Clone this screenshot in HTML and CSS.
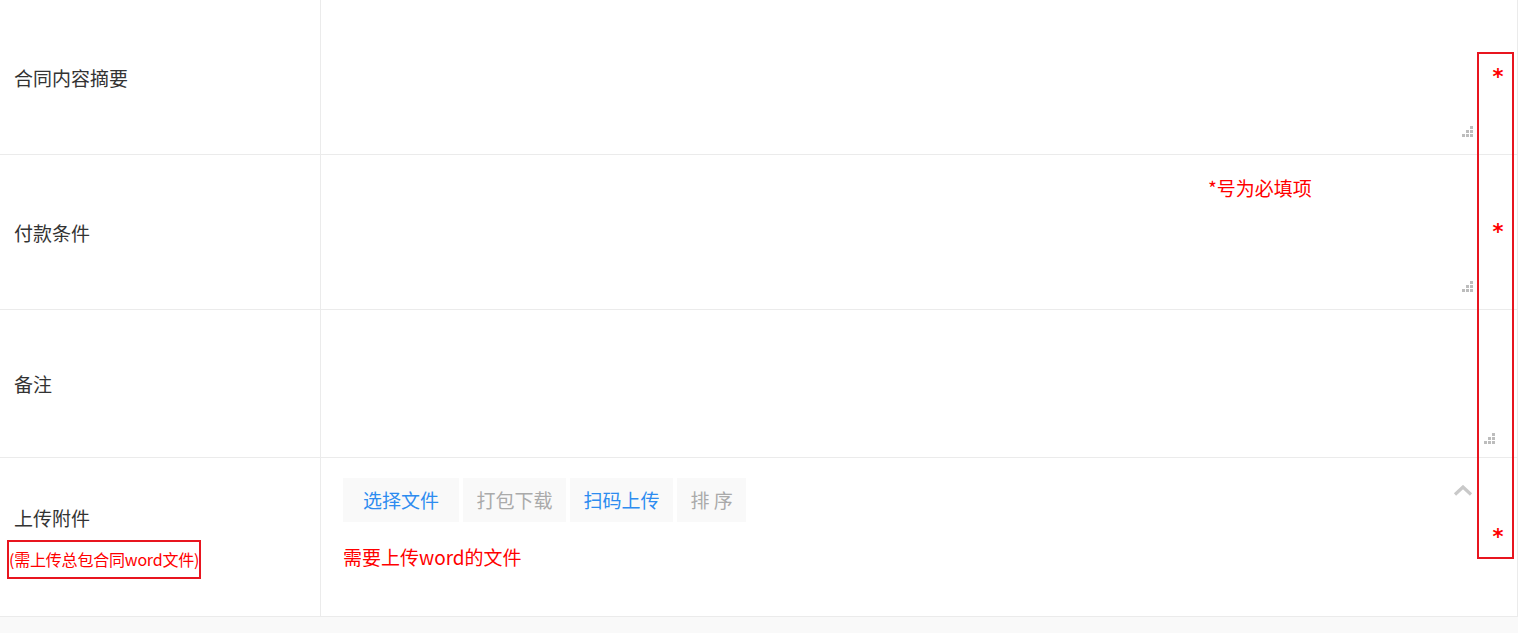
FILE: index.html
```html
<!DOCTYPE html>
<html lang="zh-CN">
<head>
<meta charset="utf-8">
<title>合同表单</title>
<link rel="stylesheet" href="styles.css">
</head>
<body>
<div class="form">
  <div class="row row-1">
    <div class="label">合同内容摘要</div>
    <div class="field">
      <div class="area"><textarea class="input"></textarea><svg class="grip" width="11" height="11" viewBox="0 0 11 11"><rect x="8" y="0" width="3" height="3"/><rect x="4" y="4" width="3" height="3"/><rect x="8" y="4" width="3" height="3"/><rect x="0" y="8" width="3" height="3"/><rect x="4" y="8" width="3" height="3"/><rect x="8" y="8" width="3" height="3"/></svg></div>
      <span class="req">*</span>
    </div>
  </div>
  <div class="row row-2">
    <div class="label">付款条件</div>
    <div class="field">
      <div class="area"><textarea class="input"></textarea><svg class="grip" width="11" height="11" viewBox="0 0 11 11"><rect x="8" y="0" width="3" height="3"/><rect x="4" y="4" width="3" height="3"/><rect x="8" y="4" width="3" height="3"/><rect x="0" y="8" width="3" height="3"/><rect x="4" y="8" width="3" height="3"/><rect x="8" y="8" width="3" height="3"/></svg></div>
      <span class="req">*</span>
      <span class="note">*号为必填项</span>
    </div>
  </div>
  <div class="row row-3">
    <div class="label">备注</div>
    <div class="field field-full">
      <div class="area"><textarea class="input"></textarea><svg class="grip" width="11" height="11" viewBox="0 0 11 11"><rect x="8" y="0" width="3" height="3"/><rect x="4" y="4" width="3" height="3"/><rect x="8" y="4" width="3" height="3"/><rect x="0" y="8" width="3" height="3"/><rect x="4" y="8" width="3" height="3"/><rect x="8" y="8" width="3" height="3"/></svg></div>
    </div>
  </div>
  <div class="row row-4">
    <div class="label label-stack">
      <div class="label-title">上传附件</div>
      <div class="label-hint">(需上传总包合同word文件)</div>
    </div>
    <div class="field field-upload">
      <div class="upload">
        <div class="btns">
          <span class="btn btn-blue btn-wide">选择文件</span>
          <span class="btn btn-grey">打包下载</span>
          <span class="btn btn-blue">扫码上传</span>
          <span class="btn btn-grey">排 序</span>
        </div>
        <div class="upload-tip">需要上传word的文件</div>
      </div>
      <span class="req">*</span>
      <svg class="chevron" width="20" height="11" viewBox="0 0 20 11"><polyline points="2,9.5 10,2 18,9.5" fill="none" stroke="#c9c9c9" stroke-width="3.2"/></svg>
    </div>
  </div>
</div>
<div class="req-box"></div>
</body>
</html>
```
FILE: styles.css
```css
* { box-sizing: border-box; }
html, body {
  margin: 0;
  padding: 0;
  background: #f9f9f9;
  font-family: "Noto Sans CJK SC", "Liberation Sans", sans-serif;
}
.form {
  width: 1518px;
  background: #fff;
  border-right: 1px solid #ebebeb;
}
.row {
  display: flex;
  border-bottom: 1px solid #ebebeb;
}
.row-1, .row-2 { height: 155px; }
.row-3 { height: 148px; }
.row-4 { height: 159px; }
.label {
  width: 321px;
  flex: none;
  border-right: 1px solid #ebebeb;
  padding-left: 14px;
  display: flex;
  align-items: center;
  font-size: 19px;
  color: #333;
}
.label-stack {
  flex-direction: column;
  align-items: flex-start;
  justify-content: center;
  padding-top: 8px;
}
.label-title {
  line-height: 30px;
}
.label-hint {
  margin-top: 7px;
  margin-left: -7px;
  border: 2px solid #e8151f;
  color: #f00;
  font-size: 16px;
  line-height: 35px;
  height: 39px;
  width: 194px;
  white-space: nowrap;
  letter-spacing: -0.2px;
}
.field {
  flex: 1;
  position: relative;
  display: flex;
  align-items: center;
  padding-left: 22px;
}
.field-full { padding-right: 22px; }
.area {
  flex: 1;
  position: relative;
  height: 120px;
}
.input {
  display: block;
  width: 100%;
  height: 100%;
  border: none;
  outline: none;
  resize: none;
  background: transparent;
}
.grip {
  position: absolute;
  right: 0;
  bottom: 0;
  fill: #bdbdbd;
}
.req {
  width: 38px;
  margin-left: 6px;
  flex: none;
  text-align: center;
  color: #f00;
  font-weight: bold;
  font-size: 21px;
  line-height: 24px;
  font-family: "DejaVu Sans", sans-serif;
}
.note {
  position: absolute;
  left: 887px;
  top: 21px;
  color: #f00;
  font-size: 19px;
  line-height: 24px;
}
.field-upload {
  align-items: stretch;
}
.upload {
  flex: 1;
  padding-top: 20px;
}
.btns {
  display: flex;
  gap: 4px;
}
.btn {
  height: 44px;
  line-height: 44px;
  padding: 0 13.5px;
  background: #f9f9f9;
  font-size: 19px;
}
.btn-wide { padding: 0 20px; }
.btn-blue { color: #2d8cf0; }
.btn-grey { color: #aaa; }
.upload-tip {
  margin-top: 23px;
  color: #f00;
  font-size: 19px;
  line-height: 24px;
}
.field-upload .req {
  align-self: center;
}
.chevron {
  position: absolute;
  right: 44px;
  top: 27px;
}
.req-box {
  position: absolute;
  left: 1477px;
  top: 52px;
  width: 37px;
  height: 507px;
  border: 2px solid #e8151f;
}
```
